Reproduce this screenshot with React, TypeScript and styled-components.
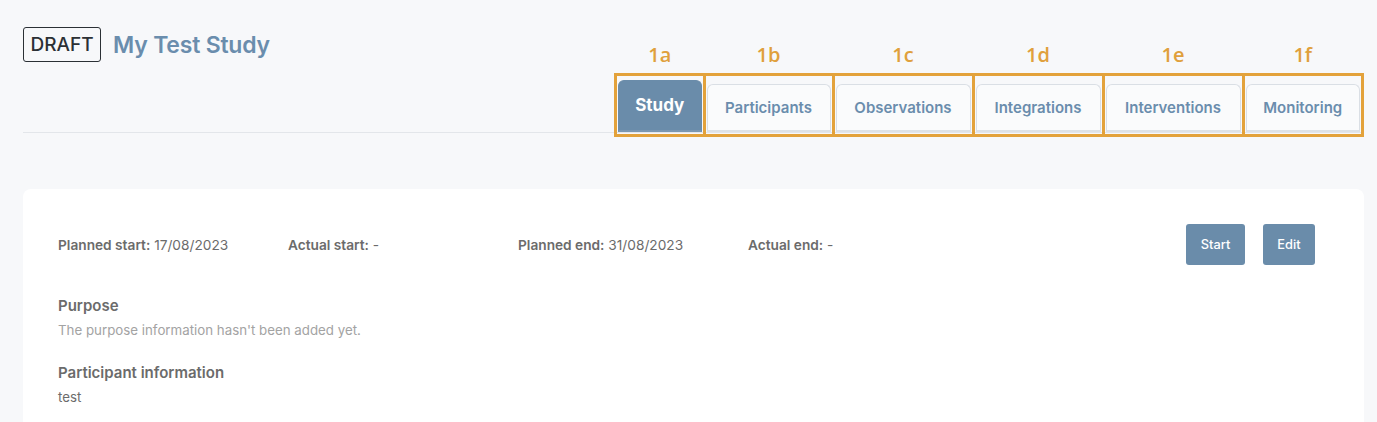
import styled, { createGlobalStyle } from "styled-components";

const GlobalStyle = createGlobalStyle`
  html, body {
    margin: 0;
    padding: 0;
    background: #f7f8fa;
    font-family: Inter, "Noto Sans", "Liberation Sans", sans-serif;
  }
  * { box-sizing: border-box; }
`;

type TabDef = { label: string; mark: string; frame: number; active?: boolean };

const tabs: TabDef[] = [
  { label: "Study", mark: "1a", frame: 91.5, active: true },
  { label: "Participants", mark: "1b", frame: 132 },
  { label: "Observations", mark: "1c", frame: 143 },
  { label: "Integrations", mark: "1d", frame: 133 },
  { label: "Interventions", mark: "1e", frame: 143 },
  { label: "Monitoring", mark: "1f", frame: 122.5 },
];

const dates = [
  { label: "Planned start:", value: "17/08/2023" },
  { label: "Actual start:", value: "-" },
  { label: "Planned end:", value: "31/08/2023" },
  { label: "Actual end:", value: "-" },
];

const Page = styled.div`
  padding: 0 13px 40px 23px;
  min-height: 422px;
`;

const Header = styled.header`
  display: flex;
  justify-content: space-between;
  align-items: flex-start;
  padding-top: 27px;
  border-bottom: 1px solid #e3e6ea;
`;

const TitleGroup = styled.div`
  display: flex;
  align-items: center;
  gap: 12px;
`;

const Badge = styled.span`
  display: inline-flex;
  align-items: center;
  justify-content: center;
  width: 78px;
  height: 35px;
  border: 1.5px solid #2b3035;
  border-radius: 3px;
  color: #2b3035;
  font-size: 19px;
  font-weight: 500;
`;

const Title = styled.h1`
  margin: 0;
  font-size: 23px;
  font-weight: 600;
  color: #6a8dad;
  letter-spacing: -0.2px;
`;

const TabGroup = styled.nav`
  display: flex;
  margin-top: 16px;
  margin-bottom: -5px;
`;

const Annotated = styled.div<{ $width: number }>`
  display: flex;
  flex-direction: column;
  width: ${(p) => p.$width}px;
  & + & {
    margin-left: -3px;
  }
`;

const Mark = styled.span`
  height: 30px;
  text-align: center;
  color: #e0a03c;
  font-family: "Open Sans", "Noto Sans", sans-serif;
  font-size: 20px;
  font-weight: 600;
  line-height: 24px;
`;

const Frame = styled.div`
  display: flex;
  align-items: flex-end;
  height: 64px;
  border: 3px solid #e3a23b;
  padding: 0 1px 2px;
`;

const Tab = styled.button<{ $active?: boolean }>`
  flex: 1;
  font-family: inherit;
  cursor: pointer;
  height: ${(p) => (p.$active ? 52 : 48)}px;
  border-radius: 6px 6px 0 0;
  border: 1px solid ${(p) => (p.$active ? "#6a8caa" : "#dadfe5")};
  border-bottom: 2px solid ${(p) => (p.$active ? "#7b97b1" : "#dde2e7")};
  background: ${(p) => (p.$active ? "#6a8caa" : "#fafbfc")};
  color: ${(p) => (p.$active ? "#ffffff" : "#6a8dad")};
  font-size: ${(p) => (p.$active ? 17 : 15)}px;
  font-weight: ${(p) => (p.$active ? 700 : 600)};
  padding: 0 0 ${(p) => (p.$active ? 2 : 0)}px;
`;

const Card = styled.section`
  margin-top: 56px;
  background: #ffffff;
  border-radius: 8px;
  padding: 35px 49px 30px 35px;
`;

const TopRow = styled.div`
  display: flex;
  align-items: center;
  justify-content: space-between;
`;

const DateRow = styled.div`
  display: flex;
`;

const DateItem = styled.div`
  width: 230px;
  font-size: 13.7px;
  color: #6b6b6b;
`;

const DateLabel = styled.b`
  font-weight: 600;
`;

const Actions = styled.div`
  display: flex;
  gap: 18px;
`;

const ActionButton = styled.button`
  height: 41px;
  padding: 0 14.5px;
  border: none;
  border-radius: 3px;
  background: #6a8caa;
  color: #ffffff;
  font-family: inherit;
  font-size: 12.8px;
  font-weight: 500;
  cursor: pointer;
`;

const Section = styled.div`
  margin-top: 31px;
  & + & {
    margin-top: 25px;
  }
`;

const SectionTitle = styled.h3`
  margin: 0 0 7px;
  font-size: 15px;
  font-weight: 600;
  color: #6b6b6b;
`;

const SectionText = styled.p<{ $muted?: boolean }>`
  margin: 0;
  font-size: 13.3px;
  color: ${(p) => (p.$muted ? "#a3a3a3" : "#6b6b6b")};
`;

const App = () => {
  return (
    <>
      <GlobalStyle />
      <Page>
        <Header>
          <TitleGroup>
            <Badge>DRAFT</Badge>
            <Title>My Test Study</Title>
          </TitleGroup>
          <TabGroup>
            {tabs.map((t) => (
              <Annotated key={t.mark} $width={t.frame}>
                <Mark>{t.mark}</Mark>
                <Frame>
                  <Tab $active={t.active}>{t.label}</Tab>
                </Frame>
              </Annotated>
            ))}
          </TabGroup>
        </Header>
        <Card>
          <TopRow>
            <DateRow>
              {dates.map((d) => (
                <DateItem key={d.label}>
                  <DateLabel>{d.label}</DateLabel> {d.value}
                </DateItem>
              ))}
            </DateRow>
            <Actions>
              <ActionButton>Start</ActionButton>
              <ActionButton>Edit</ActionButton>
            </Actions>
          </TopRow>
          <Section>
            <SectionTitle>Purpose</SectionTitle>
            <SectionText $muted>The purpose information hasn't been added yet.</SectionText>
          </Section>
          <Section>
            <SectionTitle>Participant information</SectionTitle>
            <SectionText>test</SectionText>
          </Section>
        </Card>
      </Page>
    </>
  );
};

export default App;
